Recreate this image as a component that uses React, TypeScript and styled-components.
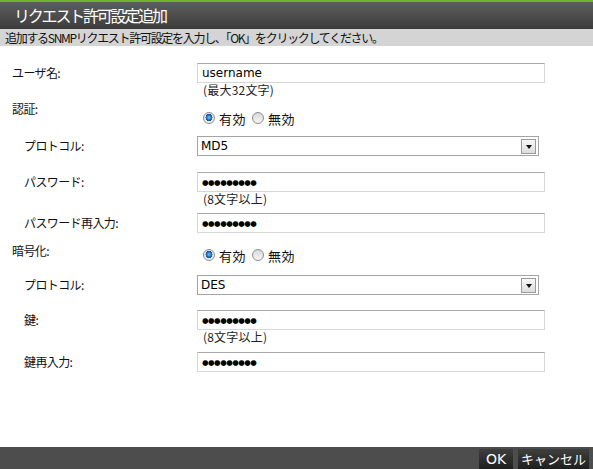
import React from "react";
import styled, { createGlobalStyle } from "styled-components";

const Global = createGlobalStyle`
  html, body { margin: 0; padding: 0; background: #fff; }
  body { font-family: "Noto Sans CJK JP", "DejaVu Sans", sans-serif; }
  * { box-sizing: border-box; }
`;

const Page = styled.div`
  width: 593px;
  height: 469px;
  display: flex;
  flex-direction: column;
  overflow: hidden;
`;

const TitleBar = styled.div`
  height: 29px;
  border-top: 2px solid #6cb52a;
  background: linear-gradient(#5e5e5e, #3c3c3c);
  color: #fff;
  font-size: 16px;
  line-height: 26px;
  padding-left: 14px;
  letter-spacing: -2.2px;
`;

const Desc = styled.div`
  height: 17px;
  background: #d4d4d4;
  font-size: 12px;
  line-height: 17px;
  padding-left: 5px;
  color: #111;
  letter-spacing: -1.3px;
  white-space: nowrap;
`;

const Main = styled.div`
  flex: 1;
  display: flex;
  flex-direction: column;
`;

const Row = styled.div<{ $top: number }>`
  display: flex;
  align-items: flex-start;
  margin-top: ${(p) => p.$top}px;
`;

const Label = styled.div<{ $indent: number }>`
  width: 197px;
  padding-left: ${(p) => p.$indent}px;
  font-size: 12px;
  line-height: 20px;
  color: #111;
  letter-spacing: -0.6px;
`;

const Field = styled.div`
  display: flex;
  flex-direction: column;
`;

const TextBox = styled.div`
  width: 348px;
  height: 20px;
  border: 1px solid #d6d6d6;
  border-top-color: #a9a9a9;
  padding-left: 4px;
  font-family: "DejaVu Sans", sans-serif;
  font-size: 12px;
  line-height: 18px;
  color: #000;
`;

const Dots = styled.span`
  font-family: "DejaVu Sans", sans-serif;
  font-size: 7.5px;
  letter-spacing: -0.5px;
  position: relative;
  top: -1px;
`;

const Hint = styled.div`
  padding-left: 6px;
  font-size: 12px;
  line-height: 14px;
  color: #222;
  letter-spacing: 0.2px;
`;

const SelectBox = styled.div`
  width: 342px;
  height: 20px;
  border: 1px solid #a4a4a4;
  display: flex;
  align-items: center;
  justify-content: space-between;
  padding-left: 3px;
  padding-right: 2px;
  font-family: "DejaVu Sans", sans-serif;
  font-size: 12px;
  color: #000;
`;

const Arrow = styled.div`
  width: 15px;
  height: 15px;
  border: 1px solid #9a9a9a;
  background: linear-gradient(#f8f8f8, #dcdcdc);
  display: flex;
  align-items: center;
  justify-content: center;
  &::after {
    content: "";
    border-left: 3.5px solid transparent;
    border-right: 3.5px solid transparent;
    border-top: 4px solid #111;
    margin-top: 1px;
  }
`;

const RadioGroup = styled.div<{ $offset: number }>`
  display: flex;
  align-items: center;
  height: 20px;
  margin-top: ${(p) => p.$offset}px;
  padding-left: 6px;
  gap: 6px;
`;

const RadioItem = styled.label`
  display: flex;
  align-items: center;
  gap: 4px;
  font-size: 13px;
  color: #111;
  letter-spacing: 0.5px;
`;

const RadioDot = styled.span<{ $on: boolean }>`
  width: 12px;
  height: 12px;
  border-radius: 50%;
  border: 1px solid #8c8c8c;
  background: ${(p) =>
    p.$on
      ? "radial-gradient(circle at 50% 45%, #7cc4f2 0, #1f78c8 2.2px, #0f4f9a 3.4px, #e6e6e6 3.6px, #f4f4f4 6px)"
      : "linear-gradient(#d8d8d8, #f6f6f6)"};
`;

const Footer = styled.div`
  height: 22px;
  background: #4d4d4d;
  display: flex;
  justify-content: flex-end;
  align-items: flex-end;
  gap: 5px;
  padding-right: 4px;
`;

const Button = styled.button<{ $w: number }>`
  width: ${(p) => p.$w}px;
  height: 20px;
  border: none;
  padding: 0;
  background: linear-gradient(#3f3f3f, #1f1f1f);
  color: #fff;
  font-family: "Noto Sans CJK JP", "DejaVu Sans", sans-serif;
  font-size: 13px;
  line-height: 18px;
  display: flex;
  justify-content: center;
  align-items: center;
`;

const OkText = styled.span`
  font-family: "DejaVu Sans", sans-serif;
  font-size: 14px;
`;

const Radios = ({ on, offset }: { on: boolean; offset: number }) => (
  <RadioGroup $offset={offset}>
    <RadioItem>
      <RadioDot $on={on} />
      有効
    </RadioItem>
    <RadioItem>
      <RadioDot $on={!on} />
      無効
    </RadioItem>
  </RadioGroup>
);

const PW = "●●●●●●●●●";

export default function App() {
  return (
    <Page>
      <Global />
      <TitleBar>リクエスト許可設定追加</TitleBar>
      <Desc>追加するSNMPリクエスト許可設定を入力し、「OK」をクリックしてください。</Desc>
      <Main>
        <Row $top={17}>
          <Label $indent={12}>ユーザ名:</Label>
          <Field>
            <TextBox>username</TextBox>
            <Hint>(最大32文字)</Hint>
          </Field>
        </Row>
        <Row $top={2}>
          <Label $indent={12}>認証:</Label>
          <Radios on offset={9} />
        </Row>
        <Row $top={8}>
          <Label $indent={24}>プロトコル:</Label>
          <SelectBox>
            MD5
            <Arrow />
          </SelectBox>
        </Row>
        <Row $top={16}>
          <Label $indent={24}>パスワード:</Label>
          <Field>
            <TextBox>
              <Dots>{PW}</Dots>
            </TextBox>
            <Hint>(8文字以上)</Hint>
          </Field>
        </Row>
        <Row $top={7}>
          <Label $indent={24}>パスワード再入力:</Label>
          <TextBox>
            <Dots>{PW}</Dots>
          </TextBox>
        </Row>
        <Row $top={8}>
          <Label $indent={12}>暗号化:</Label>
          <Radios on offset={4} />
        </Row>
        <Row $top={10}>
          <Label $indent={24}>プロトコル:</Label>
          <SelectBox>
            DES
            <Arrow />
          </SelectBox>
        </Row>
        <Row $top={15}>
          <Label $indent={24}>鍵:</Label>
          <Field>
            <TextBox>
              <Dots>{PW}</Dots>
            </TextBox>
            <Hint>(8文字以上)</Hint>
          </Field>
        </Row>
        <Row $top={8}>
          <Label $indent={24}>鍵再入力:</Label>
          <TextBox>
            <Dots>{PW}</Dots>
          </TextBox>
        </Row>
      </Main>
      <Footer>
        <Button $w={34}>
          <OkText>OK</OkText>
        </Button>
        <Button $w={71}>キャンセル</Button>
      </Footer>
    </Page>
  );
}
